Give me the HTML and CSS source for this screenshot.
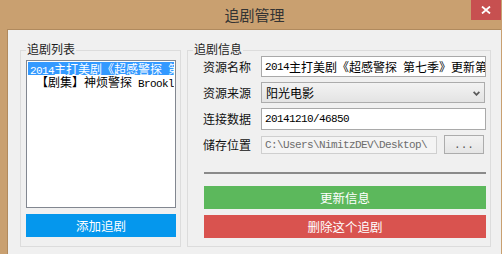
FILE: index.html
```html
<!DOCTYPE html>
<html lang="zh-CN">
<head>
<meta charset="utf-8">
<title>追剧管理</title>
<link rel="stylesheet" href="styles.css">
</head>
<body>
<div class="window">
  <div class="titlebar">
    <div class="title">追剧管理</div>
    <div class="close">
      <svg width="10" height="8" viewBox="0 0 10 8"><path d="M1 0.5 L9 7.5 M9 0.5 L1 7.5" stroke="#fff" stroke-width="1.8" fill="none"/></svg>
    </div>
  </div>
  <div class="client">
    <section class="group group-list">
      <div class="legend">追剧列表</div>
      <div class="listbox">
        <div class="item selected"><span class="en">2014</span>主打美剧《超感警探<span class="en"> </span>第七季》更新第10集</div>
        <div class="item"><span class="en"> </span>【剧集】神烦警探<span class="en"> Brooklyn Nine-Nine</span></div>
      </div>
      <button class="btn btn-blue">添加追剧</button>
    </section>
    <section class="group group-info">
      <div class="legend">追剧信息</div>
      <div class="form">
        <div class="row row-a">
          <div class="label">资源名称</div>
          <div class="field"><span class="en">2014</span>主打美剧《超感警探<span class="en"> </span>第七季》更新第10集</div>
        </div>
        <div class="row row-a">
          <div class="label">资源来源</div>
          <div class="select">
            <span class="select-text">阳光电影</span>
            <svg class="chev" width="7" height="5" viewBox="0 0 7 5"><polyline points="0.6,0.8 3.5,3.8 6.4,0.8" stroke="#5a5a5a" stroke-width="1.8" fill="none"/></svg>
          </div>
        </div>
        <div class="row row-b">
          <div class="label">连接数据</div>
          <div class="field"><span class="en">20141210/46850</span></div>
        </div>
        <div class="row row-c">
          <div class="label">储存位置</div>
          <div class="field field-disabled"><span class="en">C:\Users\NimitzDEV\Desktop\</span></div>
          <button class="browse">...</button>
        </div>
      </div>
      <div class="sep"></div>
      <div class="actions">
        <button class="btn btn-green">更新信息</button>
        <button class="btn btn-red">删除这个追剧</button>
      </div>
    </section>
  </div>
</div>
</body>
</html>
```
FILE: styles.css
```css
html, body {
  margin: 0;
  padding: 0;
  overflow: hidden;
}
body {
  background: #c9a070;
  font-family: "Noto Sans CJK SC", "Noto Sans", sans-serif;
  font-size: 12px;
  color: #1e1e1e;
}
.window {
  width: 502px;
  height: 254px;
  display: flex;
  flex-direction: column;
}
.titlebar {
  height: 29px;
  display: flex;
  flex-shrink: 0;
}
.title {
  flex: 1;
  padding-left: 38px;
  text-align: center;
  font-size: 15px;
  line-height: 29px;
  color: #333;
}
.close {
  width: 30px;
  height: 20px;
  margin-right: 1px;
  background: #c75050;
  display: flex;
  align-items: center;
  justify-content: center;
}
.client {
  flex: 1;
  margin-left: 7px;
  margin-right: 1px;
  border-left: 1px solid #b08a5e;
  border-top: 1px solid #b08a5e;
  background: #f0f0f0;
  padding: 20px 0 0 12px;
  display: flex;
  gap: 6px;
  align-items: flex-start;
}
.group {
  position: relative;
  box-sizing: border-box;
  height: 197px;
  border: 1px solid #dcdcdc;
}
.legend {
  position: absolute;
  top: -9px;
  left: 5px;
  padding: 0 1px;
  line-height: 14px;
  background: #f0f0f0;
  color: #1e1e1e;
}
.group-list {
  width: 161px;
  padding: 9px 4px 9px 5px;
  display: flex;
  flex-direction: column;
  gap: 6px;
}
.listbox {
  box-sizing: border-box;
  height: 148px;
  border: 1px solid #828790;
  background: #fff;
  padding: 1px;
  overflow: hidden;
}
.item {
  height: 13px;
  line-height: 13px;
  padding-left: 2px;
  white-space: pre;
  overflow: hidden;
  color: #000;
}
.item.selected {
  background: #3399ff;
  color: #fff;
}
.en {
  font-family: "Liberation Mono", monospace;
  font-size: 11px;
  letter-spacing: -0.6px;
  white-space: pre;
}
.btn {
  display: block;
  box-sizing: border-box;
  height: 23px;
  border: none;
  padding: 0;
  margin: 0;
  font-family: "Noto Sans CJK SC", "Noto Sans", sans-serif;
  font-size: 12.5px;
  color: #fff;
  cursor: pointer;
}
.btn-blue {
  width: 150px;
  background: #0597ed;
}
.btn-green {
  background: #5cb85c;
}
.btn-red {
  background: #d9534f;
}
.group-info {
  width: 304px;
  padding: 5px 4px 8px 15px;
  display: flex;
  flex-direction: column;
}
.form {
  display: flex;
  flex-direction: column;
  gap: 5px;
}
.row {
  display: flex;
  align-items: stretch;
}
.row-a { height: 21px; }
.row-b { height: 22px; }
.row-c { height: 18px; margin-top: 1px; }
.label {
  width: 58px;
  flex-shrink: 0;
  display: flex;
  align-items: center;
  line-height: 16px;
  color: #111;
}
.field {
  flex: 1;
  min-width: 0;
  box-sizing: border-box;
  border: 1px solid #a9a9a9;
  background: #fff;
  padding: 0 3px;
  display: flex;
  align-items: center;
  line-height: 16px;
  white-space: nowrap;
  overflow: hidden;
  color: #000;
}
.field-disabled {
  background: #f4f4f4;
  border-color: #cfcfcf;
  color: #6d6d6d;
  margin-right: 7px;
}
.select {
  flex: 1;
  box-sizing: border-box;
  margin-right: 1px;
  border: 1px solid #acacac;
  background: linear-gradient(#f3f3f3, #e3e3e3);
  padding: 0 4px 0 4px;
  display: flex;
  align-items: center;
  justify-content: space-between;
  line-height: 16px;
  color: #000;
}
.chev {
  margin-top: 1px;
}
.browse {
  width: 40px;
  box-sizing: border-box;
  margin: -1px 2px 0 0;
  height: 19px;
  border: 1px solid #acacac;
  background: linear-gradient(#f2f2f2, #e5e5e5);
  color: #555;
  font-family: "Liberation Mono", monospace;
  font-size: 11px;
  padding: 0;
}
.sep {
  margin: 18px 0 0 1px;
  height: 2px;
  background: #8a8a8a;
}
.actions {
  margin: 12px 0 0 1px;
  display: flex;
  flex-direction: column;
  gap: 6px;
}
```
